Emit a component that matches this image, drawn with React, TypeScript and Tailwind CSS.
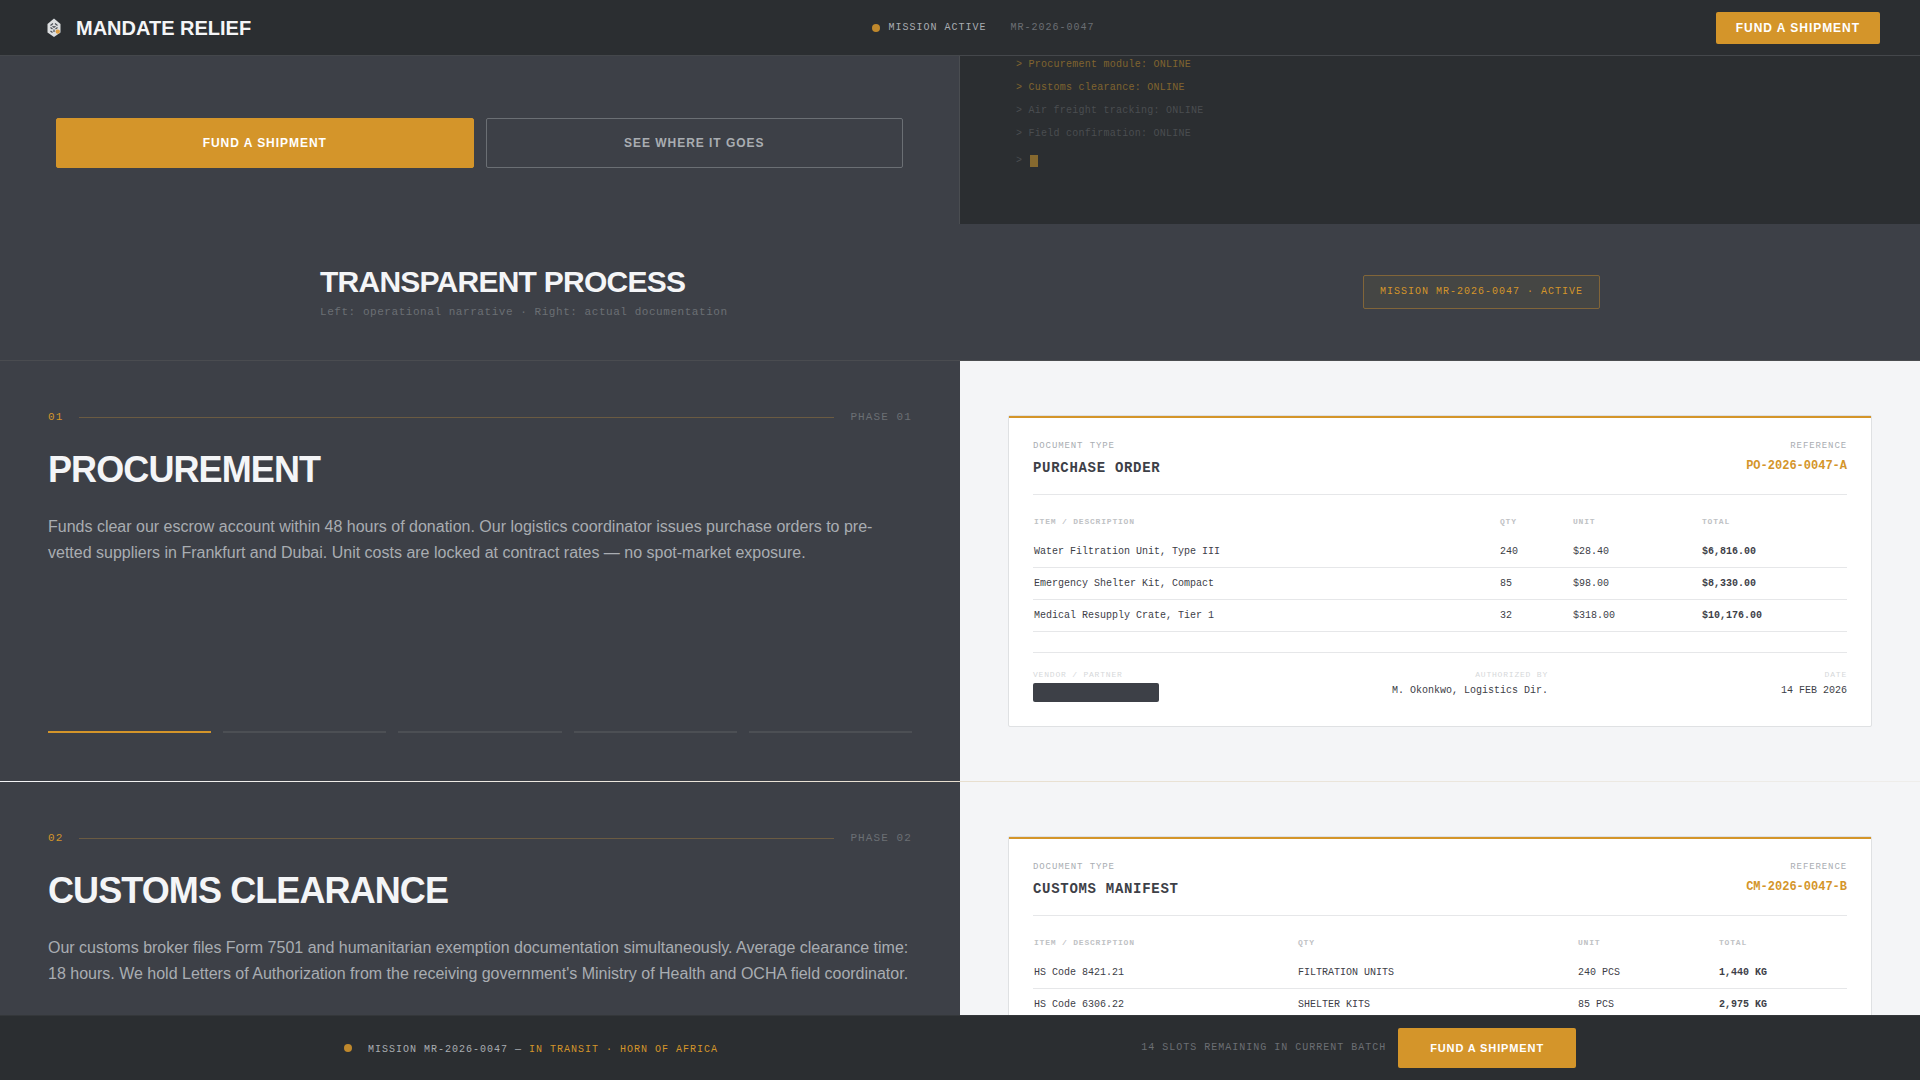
import type { ReactNode } from "react";

const SANS = "font-['Liberation_Sans',Arial,sans-serif]";
const MONO = "font-['Liberation_Mono','Courier_New',monospace]";

type Row = [string, string, string, string];

interface Doc {
  type: string;
  reference: string;
  columns: [string, string, string, string];
  rows: Row[];
  footer?: { authorizedBy: string; date: string };
}

interface Phase {
  number: string;
  title: string;
  body: string;
  doc: Doc;
}

const STEPS = 5;

const phases: Phase[] = [
  {
    number: "01",
    title: "PROCUREMENT",
    body: "Funds clear our escrow account within 48 hours of donation. Our logistics coordinator issues purchase orders to pre-vetted suppliers in Frankfurt and Dubai. Unit costs are locked at contract rates — no spot-market exposure.",
    doc: {
      type: "PURCHASE ORDER",
      reference: "PO-2026-0047-A",
      columns: ["", "w-[73px]", "w-[129px]", "w-[146px]"],
      rows: [
        ["Water Filtration Unit, Type III", "240", "$28.40", "$6,816.00"],
        ["Emergency Shelter Kit, Compact", "85", "$98.00", "$8,330.00"],
        ["Medical Resupply Crate, Tier 1", "32", "$318.00", "$10,176.00"],
      ],
      footer: { authorizedBy: "M. Okonkwo, Logistics Dir.", date: "14 FEB 2026" },
    },
  },
  {
    number: "02",
    title: "CUSTOMS CLEARANCE",
    body: "Our customs broker files Form 7501 and humanitarian exemption documentation simultaneously. Average clearance time: 18 hours. We hold Letters of Authorization from the receiving government's Ministry of Health and OCHA field coordinator.",
    doc: {
      type: "CUSTOMS MANIFEST",
      reference: "CM-2026-0047-B",
      columns: ["", "w-[280px]", "w-[141px]", "w-[129px]"],
      rows: [
        ["HS Code 8421.21", "FILTRATION UNITS", "240 PCS", "1,440 KG"],
        ["HS Code 6306.22", "SHELTER KITS", "85 PCS", "2,975 KG"],
      ],
    },
  },
];

const log = [
  { text: "> Procurement module: ONLINE", tone: "text-[#80642f]" },
  { text: "> Customs clearance: ONLINE", tone: "text-[#80642f]" },
  { text: "> Air freight tracking: ONLINE", tone: "text-[#4a4d50]" },
  { text: "> Field confirmation: ONLINE", tone: "text-[#4a4d50]" },
];

function LogoMark() {
  return (
    <svg viewBox="0 0 28 28" className="size-7" aria-hidden="true">
      <path d="M14 4.500 20.500 10v8.500L14 23l-6.500-4.500V10Z" fill="#dcdee0" />
      <path
        d="M10.500 11.500 13 9.500M15 9.500l2.500 2M10.500 13.500l2 1.500M17.500 13.500l-2 1.500M12.500 12.300l1.500 1 1.500-1M10.500 17l2 1.500M14 15.500v2.500"
        fill="none"
        stroke="#4a4e55"
        strokeWidth="1.200"
      />
      <circle cx="17.800" cy="17.600" r="2.200" fill="#e0a043" />
    </svg>
  );
}

function Header() {
  return (
    <header className="z-10 flex h-14 shrink-0 items-center justify-between border-b border-[#44474b] bg-[#2b2e31] px-10">
      <a href="#top" className="flex items-center gap-2">
        <LogoMark />
        <span className="text-xl font-bold text-[#f4f5f7]">MANDATE RELIEF</span>
      </a>
      <div className={`${MONO} flex items-center gap-6 text-[10px] leading-[15px] tracking-widest`}>
        <span className="flex items-center gap-2 text-[#a9adb2]">
          <span className="size-2 rounded-full bg-[#bf882c]" />
          MISSION ACTIVE
        </span>
        <span className="text-[#6b6f74]">MR-2026-0047</span>
      </div>
      <button className="rounded-xs bg-[#d4952a] px-5 py-2 text-xs font-bold tracking-[0.08em] text-white">
        FUND A SHIPMENT
      </button>
    </header>
  );
}

function Hero() {
  return (
    <section className="grid grid-cols-2">
      <div className="flex flex-col justify-end border-r border-[#4a4d51] px-14 pt-[62px] pb-14">
        <div className="grid grid-cols-2 gap-3">
          <button className="rounded-xs border border-[#d4952a] bg-[#d4952a] py-4 text-xs font-bold tracking-[0.08em] text-white">
            FUND A SHIPMENT
          </button>
          <button className="rounded-xs border border-[#6b6f74] py-4 text-xs font-bold tracking-[0.08em] text-[#a9adb2]">
            SEE WHERE IT GOES
          </button>
        </div>
      </div>
      <div className={`${MONO} flex flex-col justify-end bg-[#2b2e31] px-14 pb-14 text-[10px] leading-[15px] tracking-wide`}>
        <div className="flex flex-col gap-2">
          {log.map((line) => (
            <p key={line.text} className={line.tone}>
              {line.text}
            </p>
          ))}
        </div>
        <div className="mt-3 flex items-center gap-2 text-[#4a4d50]">
          <span>&gt;</span>
          <span className="h-3 w-2 bg-[#86692f]" />
        </div>
      </div>
    </section>
  );
}

function ProcessHeading() {
  return (
    <section className="border-b border-[#4a4c50] py-10">
      <div className="mx-auto flex max-w-[1280px] items-center justify-between">
        <div>
          <h2 className="text-3xl leading-9 font-bold tracking-tight text-[#f4f5f7]">TRANSPARENT PROCESS</h2>
          <p className={`${MONO} mt-1 text-[11px] leading-4 tracking-wider text-[#6b6f74]`}>
            Left: operational narrative · Right: actual documentation
          </p>
        </div>
        <div
          className={`${MONO} rounded-xs border border-[#816539] bg-[#454644] px-4 py-2 text-[10px] leading-4 tracking-widest text-[#d4952a]`}
        >
          MISSION MR-2026-0047 · ACTIVE
        </div>
      </div>
    </section>
  );
}

function Label({ children }: { children: ReactNode }) {
  return <p className="text-[9px] leading-3 tracking-widest text-[#a9adb2]">{children}</p>;
}

function FootLabel({ children }: { children: ReactNode }) {
  return <p className="text-[8px] leading-3 tracking-widest text-[#d6d8da]">{children}</p>;
}

function DocumentCard({ doc }: { doc: Doc }) {
  return (
    <article className={`${MONO} relative rounded-xs border border-[#dfe1e3] bg-white p-6 text-[#3d4047]`}>
      <div className="absolute inset-x-0 top-0 h-0.5 bg-[#d4952a]" />
      <div className="flex justify-between border-b border-[#e6e7e9] pb-4">
        <div>
          <Label>DOCUMENT TYPE</Label>
          <h3 className="mt-1.5 text-sm leading-5 font-bold tracking-wider">{doc.type}</h3>
        </div>
        <div className="text-right">
          <Label>REFERENCE</Label>
          <p className="mt-1.5 text-xs leading-4 font-bold text-[#d4952a]">{doc.reference}</p>
        </div>
      </div>
      <table className="mt-5 w-full table-fixed border-separate border-spacing-0 text-left text-[10px] leading-[15px]">
        <thead>
          <tr className="text-[8px] leading-3 tracking-widest text-[#bfc2c5]">
            {["ITEM / DESCRIPTION", "QTY", "UNIT", "TOTAL"].map((name, i) => (
              <th key={name} scope="col" className={`${doc.columns[i]} px-px pt-px pb-2 font-bold`}>
                {name}
              </th>
            ))}
          </tr>
        </thead>
        <tbody>
          {doc.rows.map((row) => (
            <tr key={row[0]} className="h-8">
              {row.map((cell, i) => (
                <td key={i} className={`border-b border-[#e6e7e9] px-px ${i === 3 ? "font-bold" : ""}`}>
                  {cell}
                </td>
              ))}
            </tr>
          ))}
        </tbody>
      </table>
      {doc.footer && (
        <div className="mt-5 flex justify-between border-t border-[#e6e7e9] pt-4 text-[10px] leading-[15px]">
          <div>
            <FootLabel>VENDOR / PARTNER</FootLabel>
            <div role="img" aria-label="Redacted" className="mt-0.5 h-[19px] w-[126px] rounded-xs bg-[#3d4047]" />
          </div>
          <div className="text-right">
            <FootLabel>AUTHORIZED BY</FootLabel>
            <p className="mt-0.5">{doc.footer.authorizedBy}</p>
          </div>
          <div className="text-right">
            <FootLabel>DATE</FootLabel>
            <p className="mt-0.5">{doc.footer.date}</p>
          </div>
        </div>
      )}
    </article>
  );
}

function PhaseSection({ phase, index }: { phase: Phase; index: number }) {
  return (
    <section>
      <div className="grid min-h-[420px] grid-cols-2">
        <div className="flex flex-col bg-[#3d4047] p-12">
          <div className={`${MONO} flex items-center gap-4 text-[11px] leading-[17px] tracking-widest`}>
            <span className="text-[#d4952a]">{phase.number}</span>
            <span className="h-px flex-1 bg-[#6b5b42]" />
            <span className="text-[#6b6f74]">PHASE {phase.number}</span>
          </div>
          <h3 className="mt-6 text-4xl leading-10 font-bold tracking-tight text-[#f4f5f7]">{phase.title}</h3>
          <p className="mt-6 text-base leading-[26px] text-[#a9adb2]">{phase.body}</p>
          <div className="mt-auto flex gap-3">
            {Array.from({ length: STEPS }, (_, i) => (
              <span key={i} className={i <= index ? "h-0.5 flex-1 bg-[#d4952a]" : "h-0.5 flex-1 bg-[#4c4f54]"} />
            ))}
          </div>
        </div>
        <div className="bg-[#f4f5f7] px-12 py-[54px]">
          <DocumentCard doc={phase.doc} />
        </div>
      </div>
      <div className="h-px bg-[linear-gradient(to_right,#f4f5f7,#e8dfcf_50%,#eeedeb)]" />
    </section>
  );
}

function MissionBar() {
  return (
    <footer className="z-10 shrink-0 border-t border-[#34373a] bg-[#2b2e31] py-3">
      <div className="mx-auto flex max-w-[1280px] items-center justify-between px-6">
        <div className="flex items-center gap-4">
          <span className="size-2 rounded-full bg-[#bf882c]" />
          <p className="leading-6 text-[#a9adb2]">
            <span className={`${MONO} text-[10px] tracking-widest`}>
              MISSION MR-2026-0047 — <span className="text-[#d4952a]">IN TRANSIT · HORN OF AFRICA</span>
            </span>
          </p>
        </div>
        <div className="flex items-center gap-3">
          <span className={`${MONO} text-[10px] leading-4 tracking-widest text-[#6b6f74]`}>
            14 SLOTS REMAINING IN CURRENT BATCH
          </span>
          <button className="h-10 rounded-xs bg-[#d4952a] px-8 text-[11px] font-bold tracking-[0.08em] text-white">
            FUND A SHIPMENT
          </button>
        </div>
      </div>
    </footer>
  );
}

export default function App() {
  return (
    <div id="top" className={`${SANS} flex h-screen flex-col bg-[#3d4047]`}>
      <Header />
      <main className="min-h-0 flex-1 overflow-hidden">
        <Hero />
        <ProcessHeading />
        {phases.map((phase, i) => (
          <PhaseSection key={phase.number} phase={phase} index={i} />
        ))}
      </main>
      <MissionBar />
    </div>
  );
}
